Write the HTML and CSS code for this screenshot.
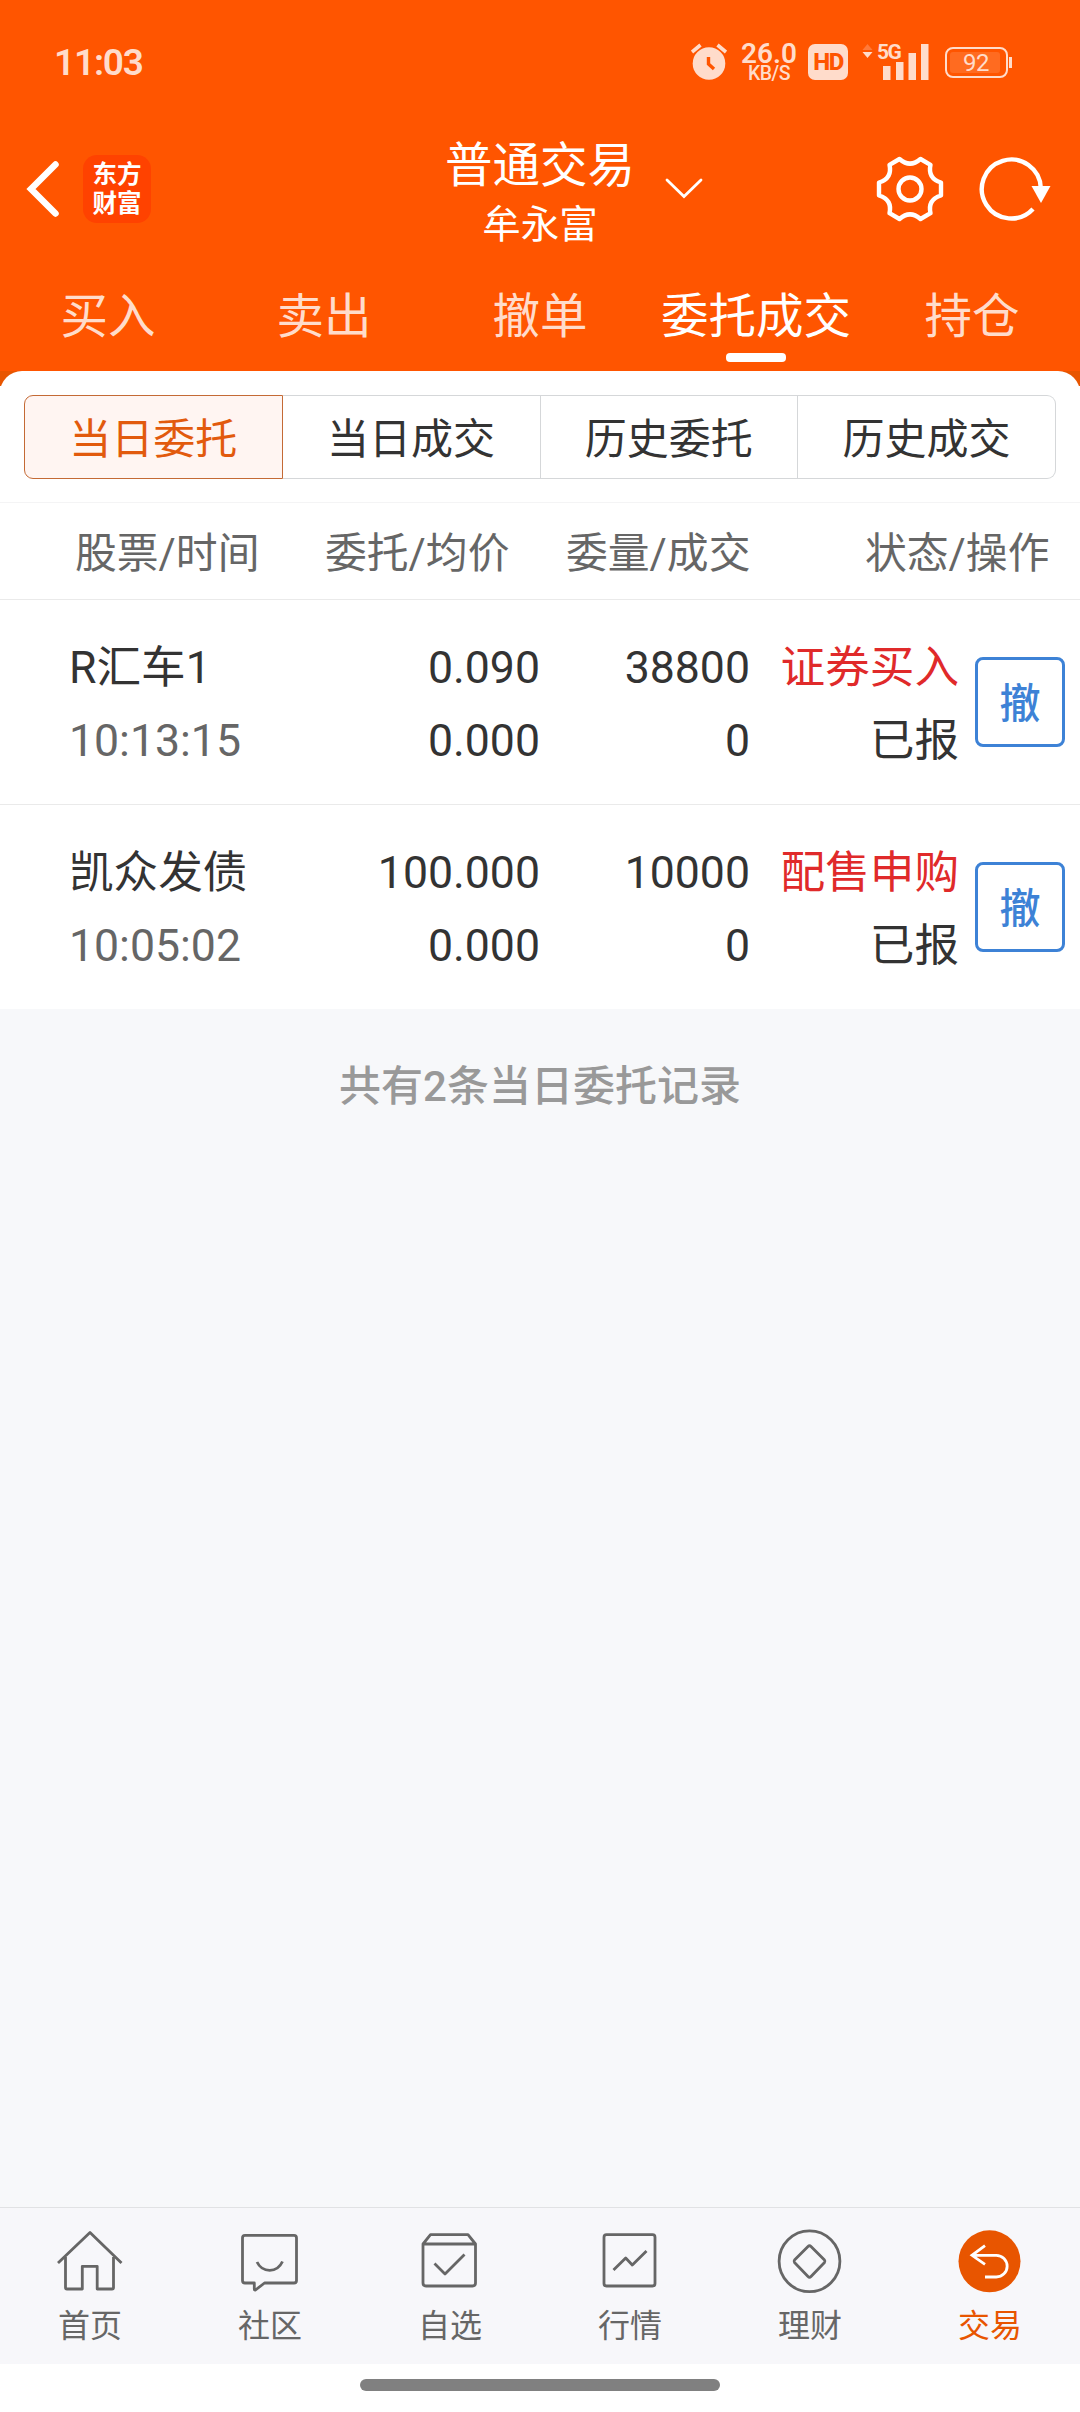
FILE: index.html
```html
<!DOCTYPE html>
<html lang="zh-CN">
<head>
    <meta charset="UTF-8">
    <meta name="viewport" content="width=device-width, initial-scale=1.0">
    <title>委托成交</title>
    <link rel="stylesheet" href="styles.css">
</head>
<body>
    <header class="header">
        <div class="status-bar">
            <span class="time">11:03</span>
            <svg class="alarm" width="36" height="38" viewBox="0 0 36 38">
                <circle cx="18" cy="20.500" r="16.300" fill="#ffdccb"/>
                <path d="M1 9 L9.500 2 M35 9 L26.500 2" stroke="#ffdccb" stroke-width="3.600" fill="none"/>
                <path d="M17.500 14 V21 L23 26" stroke="#ff5500" stroke-width="3.400" fill="none"/>
            </svg>
            <div class="speed"><b>26.0</b><span>KB/S</span></div>
            <span class="hd">HD</span>
            <div class="signal">
                <svg width="68" height="38" viewBox="0 0 68 38">
                    <path d="M0.500 7 L5.500 1 L10.500 7 Z" fill="#ff7a3a"/>
                    <path d="M0.500 9 L5.500 15 L10.500 9 Z" fill="#ffdccb"/>
                    <path d="M21 23h7.500v14H21zM34 19h7.500v18H34zM46.500 10H54v27h-7.500zM59 1h7.500v36H59z" fill="#ffdccb"/>
                </svg>
                <span class="net">5G</span>
            </div>
            <div class="battery"><span>92</span></div>
        </div>

        <div class="title-bar">
            <svg class="back" width="36" height="60" viewBox="0 0 36 60">
                <path d="M30.500 5.500 L6 30 L30.500 54.500" fill="none" stroke="#fff" stroke-width="6.500" stroke-linecap="round"/>
            </svg>
            <div class="logo">东方<br>财富</div>
            <div class="title">
                <h1>普通交易</h1>
                <p>牟永富</p>
            </div>
            <svg class="arrow-down" width="38" height="22" viewBox="0 0 38 22">
                <path d="M2 2 L19 18.500 L36 2" fill="none" stroke="#fff" stroke-width="2.800" stroke-linecap="round"/>
            </svg>
            <svg class="gear" width="68" height="68" viewBox="-34 -34 68 68">
                <path fill="none" stroke="#fff" stroke-width="4.400" stroke-linejoin="round" d="M-10.500 -30 Q0 -20.800 10.500 -30 L20.500 -24.200 Q17.500 -10.500 31 -6.500 V6.500 Q17.500 10.500 20.500 24.200 L10.500 30 Q0 20.800 -10.500 30 L-20.500 24.200 Q-17.500 10.500 -31 6.500 V-6.500 Q-17.500 -10.500 -20.500 -24.200 Z"/>
                <circle r="11.500" fill="none" stroke="#fff" stroke-width="4.400"/>
            </svg>
            <svg class="refresh" width="74" height="68" viewBox="-34 -34 74 68">
                <path d="M28.800 -1 A29.500 29.500 0 1 0 21 20" fill="none" stroke="#fff" stroke-width="4.400"/>
                <path d="M19.500 -3 H38.500 L29 14 Z" fill="#fff"/>
            </svg>
        </div>

        <nav class="tabs">
            <a>买入</a>
            <a>卖出</a>
            <a>撤单</a>
            <a class="active">委托成交</a>
            <a>持仓</a>
        </nav>
    </header>

    <main>
        <div class="corner">
            <div class="panel-top"></div>
        </div>
        <div class="panel">
            <div class="segments">
                <span class="active">当日委托</span>
                <span>当日成交</span>
                <span>历史委托</span>
                <span>历史成交</span>
            </div>

            <div class="row head">
                <span>股票/时间</span>
                <span>委托/均价</span>
                <span>委量/成交</span>
                <span>状态/操作</span>
            </div>

            <div class="row order">
                <div class="name"><p>R汇车1</p><p class="gray">10:13:15</p></div>
                <div><p>0.090</p><p>0.000</p></div>
                <div><p>38800</p><p>0</p></div>
                <div><p class="red">证券买入</p><p>已报</p></div>
                <button class="cancel">撤</button>
            </div>

            <div class="row order">
                <div class="name"><p>凯众发债</p><p class="gray">10:05:02</p></div>
                <div><p>100.000</p><p>0.000</p></div>
                <div><p>10000</p><p>0</p></div>
                <div><p class="red">配售申购</p><p>已报</p></div>
                <button class="cancel">撤</button>
            </div>
        </div>

        <p class="total">共有2条当日委托记录</p>
    </main>

    <nav class="bottom-nav">
        <a>
            <svg viewBox="0 0 72 72">
                <path d="M4 38 L36 7.500 L67.500 38"/>
                <path d="M11.500 32 V62.500 Q11.500 64 13 64 H28.300 V41.300 H43.200 V64 H58 Q59.500 64 59.500 62.500 V32"/>
            </svg>
            <span>首页</span>
        </a>
        <a>
            <svg viewBox="0 0 72 72">
                <path d="M11 10.300 H60 Q62.500 10.300 62.500 13 V55.500 Q62.500 58 60 58 H30.500 L21.500 65 Q20.300 65.500 20.300 64 V58 H11 Q8.500 58 8.500 55.500 V13 Q8.500 10.300 11 10.300 Z"/>
                <path d="M23 37 Q27 45.300 35.700 45.300 Q44.500 45.300 48.500 36.500"/>
            </svg>
            <span>社区</span>
        </a>
        <a>
            <svg viewBox="0 0 72 72">
                <path d="M9 19 L16.500 9.700 H54 L61.500 19 V58 Q61.500 61 58.500 61 H12 Q9 61 9 58 Z M9 19 H61.500"/>
                <path d="M20.500 38.500 L31 49 L50.500 29.500"/>
            </svg>
            <span>自选</span>
        </a>
        <a>
            <svg viewBox="0 0 72 72">
                <rect x="10" y="9.700" width="51" height="51.300" rx="2.500"/>
                <path d="M19.500 45 L31.700 33 L38.300 40 L52.500 26"/>
            </svg>
            <span>行情</span>
        </a>
        <a>
            <svg viewBox="0 0 72 72">
                <circle cx="35.500" cy="36.300" r="30.400"/>
                <path d="M34 21.500 Q35.500 20 37 21.500 L50.500 35 Q51.500 36.300 50.500 37.500 L37 51.500 Q35.500 53 34 51.500 L20.500 37.500 Q19.500 36.300 20.500 35 Z"/>
            </svg>
            <span>理财</span>
        </a>
        <a class="active">
            <svg viewBox="0 0 72 72">
                <circle class="disc" cx="35.500" cy="36.300" r="31"/>
                <path d="M31 20.700 L18 30.300 L31 39.300 M18 30.300 H42.300 A10.800 10.800 0 0 1 42.300 52 H31"/>
            </svg>
            <span>交易</span>
        </a>
    </nav>
    <div class="home-indicator"><i></i></div>
</body>
</html>
```
FILE: styles.css
```css
* {
    box-sizing: border-box;
}

body {
    margin: 0;
    width: 1080px;
    height: 2412px;
    display: flex;
    flex-direction: column;
    background-color: #f7f8fa;
    color: #333;
    font-family: Roboto, "Noto Sans CJK SC", sans-serif;
    overflow: hidden;
}

p, h1 {
    margin: 0;
    font-weight: 400;
}

svg {
    display: block;
    flex-shrink: 0;
}

.header {
    height: 371px;
    background-color: #ff5500;
    color: #fff;
}

/* status bar */
.status-bar {
    height: 124px;
    padding: 0 68px 0 54px;
    display: flex;
    align-items: center;
    color: #ffdccb;
}

.time {
    flex: 1;
    font-size: 37px;
    font-weight: 600;
    line-height: 40px;
    letter-spacing: -1.2px;
    padding-top: 2px;
}

.alarm {
    margin-right: 12px;
}

.speed {
    width: 60px;
    display: flex;
    flex-direction: column;
    align-items: center;
    margin-right: 9px;
    padding-top: 1px;
}

.speed b {
    font-size: 28px;
    line-height: 22px;
    font-weight: 600;
}

.speed span {
    font-size: 19.5px;
    line-height: 18px;
    font-weight: 500;
    letter-spacing: -0.5px;
}

.hd {
    width: 40px;
    height: 36px;
    margin-right: 14px;
    border-radius: 7px;
    background-color: #ffdccb;
    color: #ff5500;
    font-size: 24px;
    font-weight: 800;
    line-height: 37px;
    text-align: center;
    letter-spacing: -1.5px;
}

.signal {
    position: relative;
    margin-right: 15px;
}

.net {
    position: absolute;
    left: 15px;
    top: -1px;
    font-size: 21px;
    line-height: 20px;
    font-weight: 700;
    letter-spacing: -1.5px;
}

.battery {
    position: relative;
    width: 63px;
    height: 31px;
    padding: 3px;
    margin-right: 4px;
    border: 2px solid #ffdccb;
    border-radius: 8px;
}

.battery span {
    display: block;
    width: 50px;
    height: 21px;
    border-radius: 3px;
    background-color: #ff6b20;
    font-size: 24px;
    line-height: 22px;
    padding-left: 13px;
    letter-spacing: -0.5px;
}

.battery::after {
    content: "";
    position: absolute;
    right: -6px;
    top: 8px;
    width: 3px;
    height: 11px;
    background-color: #ffdccb;
}

/* title */
.title-bar {
    height: 130px;
    display: grid;
    grid-template-columns: 58px 68px 1fr 40px 171px 68px 34px 74px 30px;
    align-items: center;
    padding-left: 25px;
}

.logo {
    width: 68px;
    height: 68px;
    padding-top: 5px;
    border-radius: 14px;
    background-color: #ff4200;
    font-size: 24.5px;
    line-height: 29px;
    font-weight: 700;
    text-align: center;
}

.title {
    margin-left: 264px;
    width: 250px;
    padding-top: 9px;
    text-align: center;
}

.title h1 {
    font-size: 47.5px;
    line-height: 62px;
}

.title p {
    font-size: 38.5px;
    line-height: 56px;
}

.gear {
    grid-column: 6;
}

.refresh {
    grid-column: 8;
}

/* tabs */
.tabs {
    display: flex;
    height: 117px;
}

.tabs a {
    flex: 1;
    position: relative;
    text-align: center;
    white-space: nowrap;
    font-size: 47.5px;
    line-height: 126px;
    color: #ffdccb;
}

.tabs .active {
    color: #fff;
}

.tabs .active::after {
    content: "";
    position: absolute;
    left: 78px;
    bottom: 9px;
    width: 60px;
    height: 9px;
    border-radius: 4px;
    background-color: #fff;
}

/* content */
main {
    flex: 1;
}

.corner {
    height: 15px;
    overflow: hidden;
    background-color: #e85500;
}

.panel-top {
    height: 24px;
    background-color: #fff;
    border-radius: 22px 22px 0 0;
}

.panel {
    background-color: #fff;
    padding-top: 9px;
}

.segments {
    display: flex;
    height: 84px;
    margin: 0 24px 23px;
}

.segments span {
    flex: 1;
    border: 1px solid #d5d7d9;
    border-left-width: 0;
    font-size: 42px;
    line-height: 88px;
    text-align: center;
}

.segments .active {
    border: 1px solid #c46a35;
    border-radius: 9px 0 0 9px;
    background-color: #fff5f2;
    color: #e25a0d;
}

.segments span:last-child {
    border-radius: 0 9px 9px 0;
}

.row {
    display: grid;
    grid-template-columns: 261px 210px 210px 209px 90px;
    padding-left: 69px;
}

.head {
    height: 98px;
    border-top: 1px solid #f4f4f5;
    border-bottom: 1px solid #eaeaea;
    grid-template-columns: 250px 241px 299px 200px;
    padding-left: 75px;
    font-size: 41.8px;
    line-height: 101px;
    color: #666;
}

.order {
    height: 205px;
    padding-top: 32px;
    font-size: 44.6px;
    line-height: 73px;
    text-align: right;
    border-bottom: 1px solid #eaeaea;
}

.order:last-child {
    height: 204px;
    border-bottom: 0;
}

.name {
    text-align: left;
}

.gray {
    color: #666;
}

.red {
    color: #e02a2a;
}

.cancel {
    width: 90px;
    height: 90px;
    margin: 25px 0 0 16px;
    padding: 4px 0 0;
    border: 3px solid #3d82d6;
    border-radius: 8px;
    background-color: #fff;
    color: #3d82d6;
    font: 500 41px/80px Roboto, "Noto Sans CJK SC", sans-serif;
}

.total {
    margin-top: 46px;
    font-size: 42px;
    font-weight: 500;
    line-height: 64px;
    text-align: center;
    color: #999;
}

/* bottom navigation */
.bottom-nav {
    height: 157px;
    display: flex;
    border-top: 1px solid #e1e2e4;
    background-color: #f7f7fa;
    color: #666;
}

.bottom-nav a {
    flex: 1;
    display: flex;
    flex-direction: column;
    align-items: center;
    padding-top: 17px;
    font-size: 32px;
    line-height: 59px;
}

.bottom-nav svg {
    width: 72px;
    height: 72px;
    fill: none;
    stroke: #666;
    stroke-width: 2.8;
    stroke-linejoin: round;
}

.bottom-nav .active {
    color: #e85500;
}

.bottom-nav .active svg {
    stroke: #fff;
    stroke-linejoin: miter;
}

.bottom-nav .disc {
    fill: #e85500;
    stroke: none;
}

.home-indicator {
    height: 48px;
    padding-top: 15px;
    background-color: #fff;
}

.home-indicator i {
    display: block;
    width: 360px;
    height: 12px;
    margin: 0 auto;
    border-radius: 6px;
    background-color: #808080;
}
```
